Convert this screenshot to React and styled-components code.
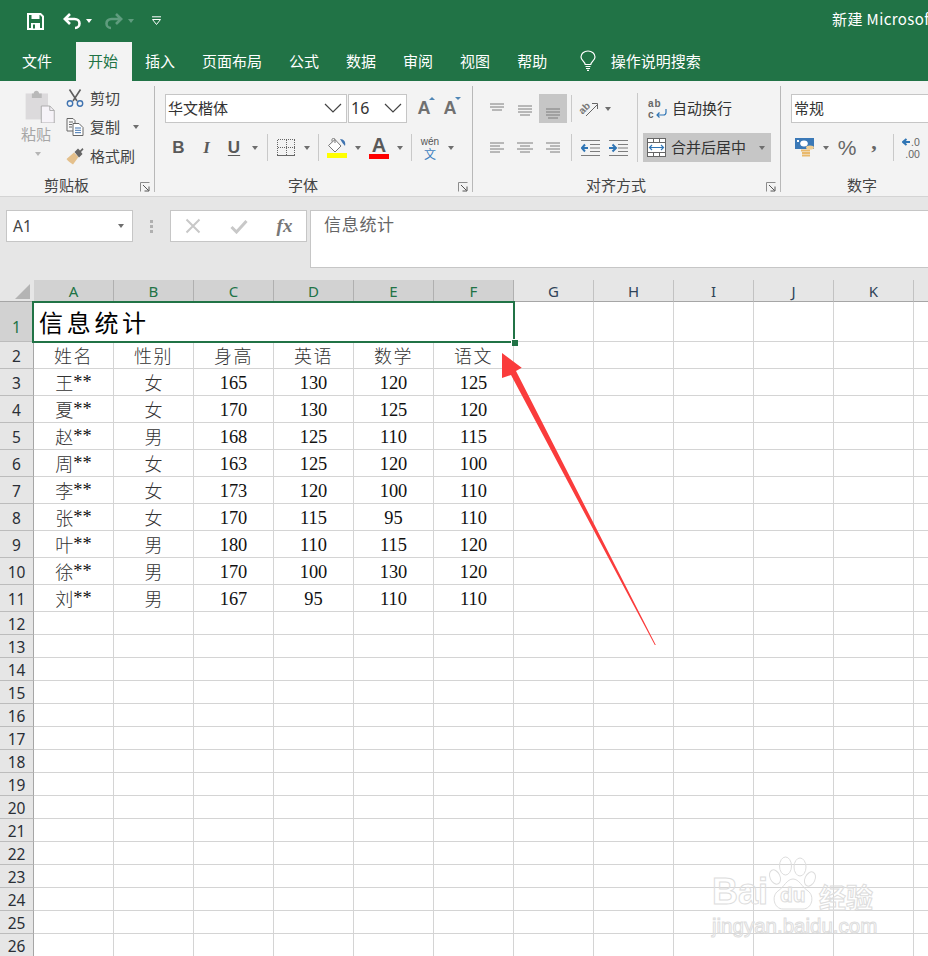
import React from "react";
import styled, {createGlobalStyle} from "styled-components";

const UI_FONT = `"Noto Sans CJK SC", "Noto Sans", sans-serif`;
const GREEN = "#217346";

const GlobalStyle = createGlobalStyle`
    html, body {
        margin: 0;
        padding: 0;
        background: #fff;
        overflow: hidden;
    }
`;

const Page = styled.div`
    position: relative;
    width: 928px;
    height: 956px;
    overflow: hidden;
    font-family: ${UI_FONT};
    font-size: 15px;
    color: #444;
`;

/* title bar */
const TitleBar = styled.div`
    display: flex;
    align-items: center;
    height: 42px;
    background: ${GREEN};
    overflow: hidden;
`;

const QuickAccess = styled.div`
    display: flex;
    align-items: center;
    flex: 0 0 832px;
    padding-left: 27px;
    box-sizing: border-box;
`;

const QuickIcon = styled.svg`
    display: block;
    margin-right: ${p => p.$gap || 0}px;
`;

const SmallCaret = styled.span`
    width: 0;
    height: 0;
    border-left: 3.5px solid transparent;
    border-right: 3.5px solid transparent;
    border-top: 4px solid ${p => p.$color || "#6e6e6e"};
    margin-left: ${p => p.$gap || 0}px;
    margin-right: ${p => p.$after || 0}px;
    flex: none;
`;

const DocTitle = styled.div`
    flex: none;
    color: #fff;
    white-space: nowrap;
    margin-top: -6px;
    letter-spacing: 0.4px;
`;

/* tabs */
const TabBar = styled.div`
    display: flex;
    align-items: stretch;
    height: 39px;
    background: ${GREEN};
    padding-left: 8.5px;
`;

const Tab = styled.div`
    display: flex;
    align-items: center;
    padding: ${p => (p.$active ? "0 13.5px 2px 12px" : "0 13.5px 2px")};
    margin-left: ${p => (p.$active ? "10.5px" : "0")};
    background: ${p => (p.$active ? "#f3f3f3" : "transparent")};
    color: ${p => (p.$active ? GREEN : "#fff")};
    line-height: 1;
    white-space: nowrap;
`;

const SearchHint = styled.div`
    display: flex;
    align-items: center;
    gap: 15px;
    margin-left: 19px;
    padding-bottom: 2px;
    color: #fff;
`;

/* ribbon */
const Ribbon = styled.div`
    display: flex;
    height: 116px;
    box-sizing: border-box;
    padding-top: 5px;
    background: #f3f3f3;
    border-bottom: 1px solid #d4d4d4;
    overflow: hidden;
`;

const Group = styled.div`
    display: flex;
    flex-direction: column;
    flex: none;
    width: ${p => p.$w}px;
    height: 106px;
    box-sizing: border-box;
    border-right: 1px solid #b8b8b8;
    &:last-child {
        border-right: none;
    }
`;

const GroupBody = styled.div`
    flex: 1;
    min-height: 0;
    padding: ${p => p.$top ?? 8}px 0 0 ${p => p.$left || 0}px;
    box-sizing: border-box;
    display: ${p => (p.$row ? "flex" : "block")};
`;

const GroupFooter = styled.div`
    display: flex;
    align-items: flex-end;
    flex: none;
    height: 15px;
    padding-right: 4px;
`;

const GroupLabel = styled.div`
    flex: 1;
    text-align: center;
    line-height: 15px;
    color: #444;
`;

const Launcher = styled.svg`
    flex: none;
    display: block;
    margin-left: 7px;
`;

const ToolRow = styled.div`
    display: flex;
    align-items: center;
    height: 29px;
    margin-bottom: ${p => p.$after || 0}px;
`;

const Tool = styled.div`
    display: flex;
    align-items: center;
    justify-content: center;
    flex: none;
    width: ${p => p.$w}px;
    height: 29px;
    background: ${p => (p.$on ? "#c6c6c6" : "transparent")};
`;

const VSep = styled.div`
    flex: none;
    width: 1px;
    height: ${p => p.$h || 27}px;
    margin-left: ${p => p.$gap || 0}px;
    background: #c9c9c9;
`;

const PasteColumn = styled.div`
    flex: none;
    width: 66px;
    display: flex;
    flex-direction: column;
    align-items: flex-start;
    padding: 3px 0 0 22px;
    box-sizing: border-box;
    color: #a6a6a6;
`;

const PasteLabel = styled.div`
    margin-top: 1px;
    margin-left: -1px;
    line-height: 20px;
`;

const PasteCaret = styled.div`
    margin: 12px 0 0 13px;
`;

const ClipColumn = styled.div`
    display: flex;
    flex-direction: column;
    gap: 4px;
    margin-top: -1px;
`;

const ClipRow = styled.div`
    display: flex;
    align-items: center;
    height: 25px;
    gap: 6px;
`;

const ClipText = styled.span`
    margin-top: -1px;
    color: #444;
`;

const DropBox = styled.div`
    display: flex;
    align-items: center;
    justify-content: space-between;
    flex: none;
    width: ${p => p.$w}px;
    height: 29px;
    margin-right: ${p => p.$after || 0}px;
    padding: 0 4px 2px 2px;
    box-sizing: border-box;
    background: #fff;
    border: 1px solid #c6c6c6;
    color: #333;
`;

const Digit = styled.span`
    font-family: "Noto Sans", sans-serif;
    font-size: 16px;
`;

const SizeTool = styled.div`
    position: relative;
    flex: none;
    width: 26px;
    text-align: center;
    font-family: "Liberation Sans", sans-serif;
    font-size: 18px;
    font-weight: 700;
    color: #707070;
    &::after {
        content: "";
        position: absolute;
        top: -1px;
        right: 2px;
        border-left: 3px solid transparent;
        border-right: 3px solid transparent;
        ${p => (p.$down ? "border-top: 3px solid #4f86b6;" : "border-bottom: 3px solid #4f86b6;")}
    }
`;

const FormatLetter = styled.span`
    font-family: ${p => (p.$serif ? `"Liberation Serif", serif` : `"Liberation Sans", sans-serif`)};
    font-size: 17px;
    font-weight: 700;
    font-style: ${p => (p.$italic ? "italic" : "normal")};
    text-decoration: ${p => (p.$under ? "underline" : "none")};
    text-underline-offset: 2px;
    color: #595959;
`;

const ColorSwatch = styled.div`
    display: flex;
    flex-direction: column;
    align-items: center;
    width: 20px;
`;

const ColorBar = styled.div`
    width: 20px;
    height: 5px;
    background: ${p => p.$color};
`;

const ColorLetter = styled.span`
    font-family: "Liberation Sans", sans-serif;
    font-size: 20px;
    font-weight: 700;
    line-height: 18px;
    color: #595959;
`;

const Phonetic = styled.div`
    display: flex;
    flex-direction: column;
    align-items: center;
`;

const PhoneticTop = styled.span`
    font-family: "Liberation Sans", sans-serif;
    font-size: 10px;
    line-height: 11px;
    color: #555;
`;

const PhoneticBottom = styled.span`
    font-size: 12px;
    line-height: 13px;
    color: #3f7fbf;
`;

const AlignLeft = styled.div`
    flex: none;
    width: 154px;
`;

const TallSep = styled.div`
    flex: none;
    width: 1px;
    height: 69px;
    margin-top: -1px;
    background: #c9c9c9;
`;

const AlignRight = styled.div`
    flex: none;
    margin-left: 5px;
    display: flex;
    flex-direction: column;
    gap: 10px;
`;

const WideButton = styled.div`
    display: flex;
    align-items: center;
    width: 128px;
    height: 29px;
    padding-left: ${p => p.$pad}px;
    box-sizing: border-box;
    background: ${p => (p.$on ? "#c6c6c6" : "transparent")};
    color: #333;
`;

const WideLabel = styled.span`
    margin-left: ${p => p.$gap}px;
    margin-top: -2px;
    white-space: nowrap;
`;

const WrapGlyph = styled.div`
    display: flex;
    flex-direction: column;
    width: 19px;
    font-family: "Liberation Sans", sans-serif;
    font-size: 10px;
    font-weight: 700;
    line-height: 11px;
    color: #666;
`;

const WrapLine = styled.div`
    display: flex;
    align-items: center;
    gap: 1px;
    letter-spacing: ${p => (p.$spaced ? "1px" : "0")};
`;

const NumberGlyph = styled.span`
    font-family: ${p => (p.$serif ? `"Liberation Serif", serif` : `"Liberation Sans", sans-serif`)};
    font-size: ${p => p.$size}px;
    font-weight: ${p => (p.$serif ? 700 : 400)};
    margin-top: ${p => (p.$serif ? "-12px" : "0")};
    color: #666;
`;

const DecimalGlyph = styled.div`
    display: flex;
    flex-direction: column;
    align-items: flex-end;
    font-family: "Liberation Sans", sans-serif;
    font-size: 10.5px;
    line-height: 12px;
    color: #666;
`;

const DecimalTop = styled.span`
    display: flex;
    align-items: center;
    gap: 1px;
`;

/* formula bar */
const FormulaArea = styled.div`
    display: flex;
    align-items: flex-start;
    height: 83px;
    box-sizing: border-box;
    padding: 13px 0 0 6px;
    background: #e6e6e6;
`;

const NameBox = styled.div`
    display: flex;
    align-items: center;
    justify-content: space-between;
    flex: none;
    width: 127px;
    height: 32px;
    box-sizing: border-box;
    padding: 0 8px 0 6px;
    background: #fff;
    border: 1px solid #c6c6c6;
    font-family: "Noto Sans", sans-serif;
    font-size: 15.5px;
    color: #444;
`;

const Grip = styled.div`
    flex: none;
    display: flex;
    flex-direction: column;
    align-items: center;
    gap: 2px;
    width: 37px;
    padding-top: 10px;
`;

const GripDot = styled.span`
    width: 3px;
    height: 3px;
    background: #b0b0b0;
`;

const FormulaButtons = styled.div`
    display: flex;
    align-items: center;
    flex: none;
    width: 137px;
    height: 32px;
    box-sizing: border-box;
    background: #fff;
    border: 1px solid #c6c6c6;
`;

const FormulaButton = styled.div`
    display: flex;
    justify-content: center;
    align-items: center;
    flex: none;
    width: ${p => p.$w}px;
`;

const FxGlyph = styled.span`
    font-family: "Liberation Serif", serif;
    font-style: italic;
    font-weight: 700;
    font-size: 19px;
    color: #777;
`;

const FormulaInput = styled.div`
    flex: 1;
    height: 58px;
    margin-left: 3px;
    box-sizing: border-box;
    padding: 1px 0 0 13px;
    background: #fff;
    border: 1px solid #c6c6c6;
    border-right: none;
    color: #666;
    font-size: 17px;
    line-height: 24px;
    letter-spacing: 0.7px;
`;

/* sheet */
const Sheet = styled.div`
    display: flex;
    flex-direction: column;
`;

const HeaderRow = styled.div`
    display: flex;
    height: 22px;
    background: #e6e6e6;
`;

const Corner = styled.div`
    flex: none;
    width: 34px;
    display: flex;
    padding: 4px 0 0 15px;
    box-sizing: border-box;
    border-bottom: 1px solid #a6a6a6;
`;

const ColHead = styled.div`
    flex: none;
    width: 80px;
    box-sizing: border-box;
    text-align: center;
    font-family: "Noto Sans", sans-serif;
    font-size: 15px;
    line-height: 23px;
    background: ${p => (p.$on ? "#d2d2d2" : "#e6e6e6")};
    color: ${p => (p.$on ? GREEN : "#2f4358")};
    border-right: 1px solid ${p => (p.$on ? "#b0b0b0" : "#c2c2c2")};
    border-bottom: 1px solid #a6a6a6;
`;

const Row = styled.div`
    display: flex;
    height: ${p => p.$h}px;
`;

const RowHead = styled.div`
    flex: none;
    width: 34px;
    display: flex;
    align-items: center;
    justify-content: center;
    box-sizing: border-box;
    padding-top: ${p => (p.$on ? 10 : 2)}px;
    font-family: "Noto Sans", sans-serif;
    font-size: 15.5px;
    background: ${p => (p.$on ? "#d2d2d2" : "#e6e6e6")};
    color: ${p => (p.$on ? GREEN : "#2a2f36")};
    border-right: 1px solid #a6a6a6;
    border-bottom: 1px solid #bcbcbc;
`;

const Cell = styled.div`
    flex: none;
    width: 80px;
    display: flex;
    align-items: center;
    justify-content: center;
    box-sizing: border-box;
    padding-top: ${p => (p.$num ? 2 : 0)}px;
    border-right: 1px solid #d4d4d4;
    border-bottom: 1px solid #d4d4d4;
    font-family: "Liberation Serif", "Noto Sans CJK SC", serif;
    font-size: 18.4px;
    color: #111;
`;

const CjkWord = styled.span`
    font-family: "Noto Sans CJK SC", sans-serif;
    font-size: 18px;
    font-weight: 300;
    letter-spacing: ${p => (p.$wide ? "1.5px" : "0")};
    color: #333;
`;

const MergedCell = styled.div`
    position: relative;
    flex: none;
    width: 480px;
    box-sizing: border-box;
    padding: 2px 0 0 5px;
    font-size: 24px;
    font-weight: 400;
    letter-spacing: 3.7px;
    line-height: 36px;
    color: #000;
    z-index: 2;
    &::after {
        content: "";
        position: absolute;
        inset: -1px -1px -1px -2px;
        border: 2px solid ${GREEN};
    }
`;

const FillHandle = styled.span`
    position: absolute;
    right: -4px;
    bottom: -4px;
    width: 6px;
    height: 6px;
    background: ${GREEN};
    border-left: 1px solid #fff;
    border-top: 1px solid #fff;
    z-index: 1;
`;

const ArrowLayer = styled.svg`
    position: absolute;
    left: 0;
    top: 0;
    z-index: 3;
    pointer-events: none;
`;

/* watermark */
const Watermark = styled.div`
    position: absolute;
    left: 712px;
    top: 855px;
    width: 170px;
    z-index: 3;
    color: transparent;
    -webkit-text-stroke: 1px #dddddd;
    font-family: "Liberation Sans", sans-serif;
`;

const MarkRow = styled.div`
    display: flex;
    align-items: flex-end;
    height: 56px;
`;

const MarkBrand = styled.span`
    font-size: 36px;
    font-weight: 700;
    line-height: 40px;
    margin-bottom: -1px;
`;

const MarkPaw = styled.div`
    position: relative;
    flex: none;
    width: 52px;
    height: 56px;
    margin-left: -1px;
`;

const MarkDu = styled.span`
    position: absolute;
    left: 13px;
    top: 28px;
    font-size: 21px;
    font-weight: 700;
    line-height: 24px;
`;

const MarkCjk = styled.span`
    font-family: "Noto Sans CJK SC", sans-serif;
    font-size: 27px;
    font-weight: 700;
    line-height: 32px;
    margin-bottom: -2px;
`;

const MarkUrl = styled.div`
    font-size: 20.5px;
    line-height: 24px;
    margin-top: 3px;
    white-space: nowrap;
`;

const Chevron = () => (
    <svg width="18" height="10" viewBox="0 0 18 10">
        <polyline points="1,1 9,9 17,1" fill="none" stroke="#444" strokeWidth="1.2"/>
    </svg>
);

const SaveIcon = () => (
    <QuickIcon $gap={19} width="17" height="17" viewBox="0 0 17 17">
        <path d="M1 1H13.5L16 3.5V16H1Z" fill="none" stroke="#fff" strokeWidth="2"/>
        <rect x="4.5" y="1" width="8" height="5" fill="#fff"/>
        <rect x="4" y="10" width="9" height="6" fill="#fff"/>
        <rect x="6" y="11.5" width="2" height="4" fill={GREEN}/>
    </QuickIcon>
);

const UndoIcon = ({color}) => (
    <QuickIcon width="18" height="17" viewBox="0 0 18 17">
        <path d="M7 1L1.8 6L7 11M2 6H11.5C14.5 6 16.5 8 16.5 10.5C16.5 13 14.5 15 12 15" fill="none" stroke={color} strokeWidth="2.6"/>
    </QuickIcon>
);

const RedoIcon = ({color}) => (
    <QuickIcon width="18" height="17" viewBox="0 0 18 17">
        <path d="M11 1L16.2 6L11 11M16 6H6.5C3.5 6 1.5 8 1.5 10.5C1.5 13 3.5 15 6 15" fill="none" stroke={color} strokeWidth="2.6"/>
    </QuickIcon>
);

const CustomizeIcon = () => (
    <QuickIcon width="11" height="10" viewBox="0 0 11 10">
        <path d="M1 0.8H10" stroke="#fff" strokeWidth="1"/>
        <path d="M1.5 3.5H9.5L5.5 8.5Z" fill="none" stroke="#fff" strokeWidth="1"/>
    </QuickIcon>
);

const BulbIcon = () => (
    <svg width="16" height="21" viewBox="0 0 16 21">
        <path d="M5.2 14.5C5 11.5 1 10.5 1 7C1 3.5 4 1 8 1C12 1 15 3.5 15 7C15 10.5 11 11.5 10.8 14.5Z" fill="none" stroke="#fff" strokeWidth="1.2"/>
        <path d="M5.5 16.5H10.5M6 18.5H10M7 20.3H9" stroke="#fff" strokeWidth="1.2"/>
    </svg>
);

const PasteIcon = () => (
    <svg width="35" height="38" viewBox="0 0 35 38">
        <path d="M2 5H27V34H2Z" fill="#dcdadc"/>
        <path d="M9 5H11C11 1 17 1 17 5H20V10H9Z" fill="#b9b9b9"/>
        <path d="M19.5 19H29L34 24V38H19.5Z" fill="#f6f3f8" stroke="#a8a8a8" strokeWidth="1"/>
        <path d="M29 19V24H34" fill="none" stroke="#a8a8a8" strokeWidth="1"/>
    </svg>
);

const CutIcon = () => (
    <svg width="18" height="18" viewBox="0 0 18 18">
        <path d="M3.5 0.5L11 12M14.5 0.5L7 12" stroke="#5f5f5f" strokeWidth="1.6" fill="none"/>
        <circle cx="4" cy="14.5" r="2.7" fill="none" stroke="#3f73b0" strokeWidth="1.4"/>
        <circle cx="14" cy="14.5" r="2.7" fill="none" stroke="#3f73b0" strokeWidth="1.4"/>
    </svg>
);

const CopyIcon = () => (
    <svg width="18" height="18" viewBox="0 0 18 18">
        <path d="M1 0.5H7L9 2.5V13H1Z" fill="#f8f8f8" stroke="#666"/>
        <path d="M3 4H7M3 6.5H6M3 9H6" stroke="#666"/>
        <path d="M7 5.5H13L17 9.5V17.5H7Z" fill="#fff" stroke="#666"/>
        <path d="M9 10H15M9 12.3H15M9 14.7H15" stroke="#3f73b0"/>
    </svg>
);

const PainterIcon = () => (
    <svg width="18" height="18" viewBox="0 0 18 18">
        <path d="M0.5 12L8 5.5L12.5 10L7 17.5C5.5 16.5 2 14.5 0.5 12Z" fill="#e4c08c"/>
        <path d="M8.5 5L12 1.5L14 3.5L16.5 1L17.5 2.5L15 5L16.5 7L13 10.5Z" fill="#666"/>
    </svg>
);

const BorderIcon = () => (
    <svg width="18" height="17" viewBox="0 0 18 17" shapeRendering="crispEdges">
        <path d="M0.5 0.5H17.5M0.5 8.5H17.5M0.5 0.5V16M17.5 0.5V16M9 0.5V16" fill="none" stroke="#666" strokeDasharray="1 1"/>
        <path d="M0 16.5H18" stroke="#666"/>
    </svg>
);

const BucketIcon = () => (
    <svg width="20" height="15" viewBox="0 0 20 15">
        <path d="M1.5 7.5L8 1.5L14 8L8 14Z" fill="#fff" stroke="#777"/>
        <path d="M5 3.5V1.5C5 0 8 0 8 1.5V5" fill="none" stroke="#777"/>
        <path d="M13 1C17 1 19 4 18 8L15.5 5Z" fill="#3f73b0"/>
    </svg>
);

const HLines = ({rows}) => (
    <svg width="20" height="22" viewBox="0 0 20 22">
        {rows.map(([x1, x2, y]) => (
            <line key={y} x1={x1} x2={x2} y1={y} y2={y} stroke="#7d7d7d" strokeWidth="1"/>
        ))}
    </svg>
);

const OrientIcon = () => (
    <svg width="20" height="19" viewBox="0 0 20 19" overflow="visible">
        <text x="0" y="13" transform="rotate(-45 5 10)" fontFamily="Liberation Sans, sans-serif" fontSize="10" fontWeight="700" fill="#777">ab</text>
        <path d="M7 17L18 6M13 4.5H18.5V10" fill="none" stroke="#666" strokeWidth="1"/>
    </svg>
);

const IndentIcon = ({flip}) => (
    <svg width="19" height="16" viewBox="0 0 19 16">
        <path d="M0 0.5H19M9 4.5H19M9 8H19M9 11.5H19M0 15.5H19" stroke="#7d7d7d"/>
        {flip
            ? <path d="M0 8H6M3.5 4.5L7 8L3.5 11.5" fill="none" stroke="#2f75b5" strokeWidth="2"/>
            : <path d="M7 8H1M4 4.5L0.8 8L4 11.5" fill="none" stroke="#2f75b5" strokeWidth="2"/>}
    </svg>
);

const WrapIcon = () => (
    <WrapGlyph>
        <WrapLine $spaced>ab</WrapLine>
        <WrapLine>
            c
            <svg width="12" height="10" viewBox="0 0 12 10">
                <path d="M11 0V3.5C11 5 10 6 8.5 6H2M4.5 3.5L2 6L4.5 8.5" fill="none" stroke="#2f75b5" strokeWidth="1.2"/>
            </svg>
        </WrapLine>
    </WrapGlyph>
);

const MergeIcon = () => (
    <svg width="19" height="19" viewBox="0 0 19 19">
        <rect x="0.5" y="0.5" width="18" height="18" fill="#fff" stroke="#666"/>
        <path d="M0.5 4.5H18.5M0.5 14.5H18.5M6.5 0.5V4.5M12.5 0.5V4.5M6.5 14.5V18.5M12.5 14.5V18.5" stroke="#666" fill="none"/>
        <path d="M2.5 9.5H16.5M5 7L2.5 9.5L5 12M14 7L16.5 9.5L14 12" stroke="#2f75b5" strokeWidth="1.2" fill="none"/>
    </svg>
);

const AccountingIcon = () => (
    <svg width="20" height="20" viewBox="0 0 20 20">
        <rect x="0" y="0" width="19" height="11" fill="#3b79b7"/>
        <ellipse cx="9" cy="5.5" rx="3.8" ry="3" fill="#fff"/>
        <rect x="2" y="2" width="2" height="2" fill="#fff"/>
        <path d="M6 12.5H15M7 15H15M7 17.5H15" stroke="#e9b96c" strokeWidth="2"/>
        <ellipse cx="15" cy="9.5" rx="4" ry="2" fill="#f2cf93"/>
    </svg>
);

const LauncherIcon = () => (
    <Launcher width="10" height="10" viewBox="0 0 10 10">
        <path d="M0.5 9.5V0.5H9.5" fill="none" stroke="#8c8c8c"/>
        <path d="M3 3L8.5 8.5M9 4.5V9H4.5" fill="none" stroke="#555"/>
    </Launcher>
);

const ALIGN_TOP = [[3, 17, 6], [3, 17, 9], [5, 15, 12]];
const ALIGN_MID = [[3, 17, 8], [3, 17, 11], [3, 17, 14], [5, 15, 17]];
const ALIGN_BOT = [[3, 17, 11], [3, 17, 14], [3, 17, 17], [5, 15, 20]];
const TEXT_LEFT = [[3, 17, 6], [3, 13, 9], [3, 17, 12], [3, 13, 15]];
const TEXT_CENTER = [[2, 18, 6], [5, 15, 9], [2, 18, 12], [5, 15, 15]];
const TEXT_RIGHT = [[3, 17, 6], [7, 17, 9], [3, 17, 12], [7, 17, 15]];

// the last column starts at the right edge, its letter is out of view
const COLUMNS = ["A", "B", "C", "D", "E", "F", "G", "H", "I", "J", "K", ""];

const TABLE = [
    ["姓名", "性别", "身高", "英语", "数学", "语文"],
    ["王**", "女", 165, 130, 120, 125],
    ["夏**", "女", 170, 130, 125, 120],
    ["赵**", "男", 168, 125, 110, 115],
    ["周**", "女", 163, 125, 120, 100],
    ["李**", "女", 173, 120, 100, 110],
    ["张**", "女", 170, 115, 95, 110],
    ["叶**", "男", 180, 110, 115, 120],
    ["徐**", "男", 170, 100, 130, 120],
    ["刘**", "男", 167, 95, 110, 110],
];

const EMPTY_ROWS = Array.from({length: 15}, (_, i) => i + 12);

function renderCellText(value) {
    if (typeof value === "number") {
        return value;
    }
    const stars = value.endsWith("**");
    const word = stars ? value.slice(0, -2) : value;
    return (
        <>
            <CjkWord $wide={word.length > 1}>{word}</CjkWord>
            {stars && "**"}
        </>
    );
}

function TopBars() {
    return (
        <>
            <TitleBar>
                <QuickAccess>
                    <SaveIcon/>
                    <UndoIcon color="#fff"/>
                    <SmallCaret $color="#fff" $gap={5} $after={13}/>
                    <RedoIcon color="#5f9c7e"/>
                    <SmallCaret $color="#5f9c7e" $gap={5} $after={17}/>
                    <CustomizeIcon/>
                </QuickAccess>
                <DocTitle>新建 Microsoft Excel 工作表.xlsx</DocTitle>
            </TitleBar>
            <TabBar>
                <Tab>文件</Tab>
                <Tab $active>开始</Tab>
                <Tab>插入</Tab>
                <Tab>页面布局</Tab>
                <Tab>公式</Tab>
                <Tab>数据</Tab>
                <Tab>审阅</Tab>
                <Tab>视图</Tab>
                <Tab>帮助</Tab>
                <SearchHint>
                    <BulbIcon/>
                    <span>操作说明搜索</span>
                </SearchHint>
            </TabBar>
        </>
    );
}

function RibbonPanel() {
    return (
        <Ribbon>
            <Group $w={155}>
                <GroupBody $row $top={0}>
                    <PasteColumn>
                        <PasteIcon/>
                        <PasteLabel>粘贴</PasteLabel>
                        <PasteCaret><SmallCaret $color="#b5b5b5"/></PasteCaret>
                    </PasteColumn>
                    <ClipColumn>
                        <ClipRow><CutIcon/><ClipText>剪切</ClipText></ClipRow>
                        <ClipRow>
                            <CopyIcon/><ClipText>复制</ClipText>
                            <SmallCaret $gap={7}/>
                        </ClipRow>
                        <ClipRow><PainterIcon/><ClipText>格式刷</ClipText></ClipRow>
                    </ClipColumn>
                </GroupBody>
                <GroupFooter>
                    <GroupLabel>剪贴板</GroupLabel>
                    <LauncherIcon/>
                </GroupFooter>
            </Group>

            <Group $w={318}>
                <GroupBody $left={10}>
                    <ToolRow $after={10}>
                        <DropBox $w={182} $after={1}>华文楷体<Chevron/></DropBox>
                        <DropBox $w={59}><Digit>16</Digit><Chevron/></DropBox>
                        <Tool $w={4}/>
                        <SizeTool>A</SizeTool>
                        <SizeTool $down>A</SizeTool>
                    </ToolRow>
                    <ToolRow>
                        <Tool $w={27}><FormatLetter>B</FormatLetter></Tool>
                        <Tool $w={29}><FormatLetter $serif $italic>I</FormatLetter></Tool>
                        <Tool $w={26}><FormatLetter $under>U</FormatLetter></Tool>
                        <SmallCaret $gap={5}/>
                        <VSep $gap={9}/>
                        <Tool $w={36}><BorderIcon/></Tool>
                        <SmallCaret/>
                        <VSep $gap={8}/>
                        <Tool $w={36}>
                            <ColorSwatch><BucketIcon/><ColorBar $color="#ffff00"/></ColorSwatch>
                        </Tool>
                        <SmallCaret/>
                        <Tool $w={36}>
                            <ColorSwatch><ColorLetter>A</ColorLetter><ColorBar $color="#ff0000"/></ColorSwatch>
                        </Tool>
                        <SmallCaret/>
                        <VSep $gap={8}/>
                        <Tool $w={36}>
                            <Phonetic>
                                <PhoneticTop>wén</PhoneticTop>
                                <PhoneticBottom>文</PhoneticBottom>
                            </Phonetic>
                        </Tool>
                        <SmallCaret/>
                    </ToolRow>
                </GroupBody>
                <GroupFooter>
                    <GroupLabel>字体</GroupLabel>
                    <LauncherIcon/>
                </GroupFooter>
            </Group>

            <Group $w={308}>
                <GroupBody $row $left={10}>
                    <AlignLeft>
                        <ToolRow $after={10}>
                            <Tool $w={28}><HLines rows={ALIGN_TOP}/></Tool>
                            <Tool $w={28}><HLines rows={ALIGN_MID}/></Tool>
                            <Tool $w={28} $on><HLines rows={ALIGN_BOT}/></Tool>
                            <VSep $gap={4}/>
                            <Tool $w={33}><OrientIcon/></Tool>
                            <SmallCaret/>
                        </ToolRow>
                        <ToolRow>
                            <Tool $w={28}><HLines rows={TEXT_LEFT}/></Tool>
                            <Tool $w={28}><HLines rows={TEXT_CENTER}/></Tool>
                            <Tool $w={28}><HLines rows={TEXT_RIGHT}/></Tool>
                            <VSep $gap={4}/>
                            <Tool $w={36}><IndentIcon/></Tool>
                            <Tool $w={20}><IndentIcon flip/></Tool>
                        </ToolRow>
                    </AlignLeft>
                    <TallSep/>
                    <AlignRight>
                        <WideButton $pad={5}>
                            <WrapIcon/>
                            <WideLabel $gap={5}>自动换行</WideLabel>
                        </WideButton>
                        <WideButton $on $pad={4}>
                            <MergeIcon/>
                            <WideLabel $gap={5}>合并后居中</WideLabel>
                            <SmallCaret $gap={13}/>
                        </WideButton>
                    </AlignRight>
                </GroupBody>
                <GroupFooter>
                    <GroupLabel>对齐方式</GroupLabel>
                    <LauncherIcon/>
                </GroupFooter>
            </Group>

            <Group $w={183}>
                <GroupBody $left={10}>
                    <ToolRow $after={10}>
                        <DropBox $w={173}>常规</DropBox>
                    </ToolRow>
                    <ToolRow>
                        <Tool $w={28}><AccountingIcon/></Tool>
                        <SmallCaret $gap={4} $after={4}/>
                        <Tool $w={28}><NumberGlyph $size={21}>%</NumberGlyph></Tool>
                        <Tool $w={26}><NumberGlyph $serif $size={22}>,</NumberGlyph></Tool>
                        <VSep $gap={6}/>
                        <Tool $w={34}>
                            <DecimalGlyph>
                                <DecimalTop>
                                    <svg width="8" height="8" viewBox="0 0 8 8">
                                        <path d="M8 4H2M4.5 1L1 4L4.5 7" fill="none" stroke="#2f75b5" strokeWidth="2"/>
                                    </svg>
                                    .0
                                </DecimalTop>
                                <span>.00</span>
                            </DecimalGlyph>
                        </Tool>
                    </ToolRow>
                </GroupBody>
                <GroupFooter>
                    <GroupLabel>数字</GroupLabel>
                    <LauncherIcon/>
                </GroupFooter>
            </Group>
        </Ribbon>
    );
}

function FormulaBar() {
    return (
        <FormulaArea>
            <NameBox>A1<SmallCaret/></NameBox>
            <Grip><GripDot/><GripDot/><GripDot/></Grip>
            <FormulaButtons>
                <FormulaButton $w={44}>
                    <svg width="16" height="16" viewBox="0 0 16 16">
                        <path d="M1.5 1.5L14.5 14.5M14.5 1.5L1.5 14.5" stroke="#c8c8c8" strokeWidth="2"/>
                    </svg>
                </FormulaButton>
                <FormulaButton $w={47}>
                    <svg width="18" height="15" viewBox="0 0 18 15">
                        <path d="M1.5 8L6.5 13L16.5 2" fill="none" stroke="#c8c8c8" strokeWidth="3"/>
                    </svg>
                </FormulaButton>
                <FormulaButton $w={45}><FxGlyph>fx</FxGlyph></FormulaButton>
            </FormulaButtons>
            <FormulaInput>信息统计</FormulaInput>
        </FormulaArea>
    );
}

function Grid() {
    return (
        <Sheet>
            <HeaderRow>
                <Corner>
                    <svg width="15" height="15" viewBox="0 0 15 15">
                        <path d="M15 0V15H0Z" fill="#b4b4b4"/>
                    </svg>
                </Corner>
                {COLUMNS.map((col, i) => <ColHead key={i} $on={i < 6}>{col}</ColHead>)}
            </HeaderRow>
            <Row $h={40}>
                <RowHead $on>1</RowHead>
                <MergedCell>信息统计<FillHandle/></MergedCell>
                {COLUMNS.slice(6).map((col, i) => <Cell key={i}/>)}
            </Row>
            {TABLE.map((values, r) => (
                <Row key={r} $h={27}>
                    <RowHead>{r + 2}</RowHead>
                    {COLUMNS.map((col, c) => (
                        <Cell key={c} $num={typeof values[c] === "number"}>
                            {c < 6 && renderCellText(values[c])}
                        </Cell>
                    ))}
                </Row>
            ))}
            {EMPTY_ROWS.map(n => (
                <Row key={n} $h={23}>
                    <RowHead>{n}</RowHead>
                    {COLUMNS.map((col, c) => <Cell key={c}/>)}
                </Row>
            ))}
        </Sheet>
    );
}

export default function App() {
    return (
        <Page>
            <GlobalStyle/>
            <TopBars/>
            <RibbonPanel/>
            <FormulaBar/>
            <Grid/>
            <ArrowLayer width="928" height="956" viewBox="0 0 928 956">
                <polygon points="502,353 521.7,367.7 516,371 655.8,645 654.8,645 511,375 502,378" fill="#fa3c3c"/>
            </ArrowLayer>
            <Watermark>
                <MarkRow>
                    <MarkBrand>Bai</MarkBrand>
                    <MarkPaw>
                        <svg width="52" height="56" viewBox="0 0 52 56">
                            <g fill="#fff" fillOpacity="0" stroke="#dddddd">
                                <ellipse cx="8" cy="22" rx="5" ry="7.5" transform="rotate(-25 8 22)"/>
                                <ellipse cx="18.5" cy="11" rx="6" ry="9"/>
                                <ellipse cx="33" cy="12" rx="6" ry="9"/>
                                <ellipse cx="43" cy="24" rx="5" ry="7.5" transform="rotate(25 43 24)"/>
                                <path d="M26 24C32 24 35 32 41 36C48 41 45 54 36 54H16C7 54 4 41 11 36C17 32 20 24 26 24Z"/>
                            </g>
                        </svg>
                        <MarkDu>du</MarkDu>
                    </MarkPaw>
                    <MarkCjk>经验</MarkCjk>
                </MarkRow>
                <MarkUrl>jingyan.baidu.com</MarkUrl>
            </Watermark>
        </Page>
    );
}
